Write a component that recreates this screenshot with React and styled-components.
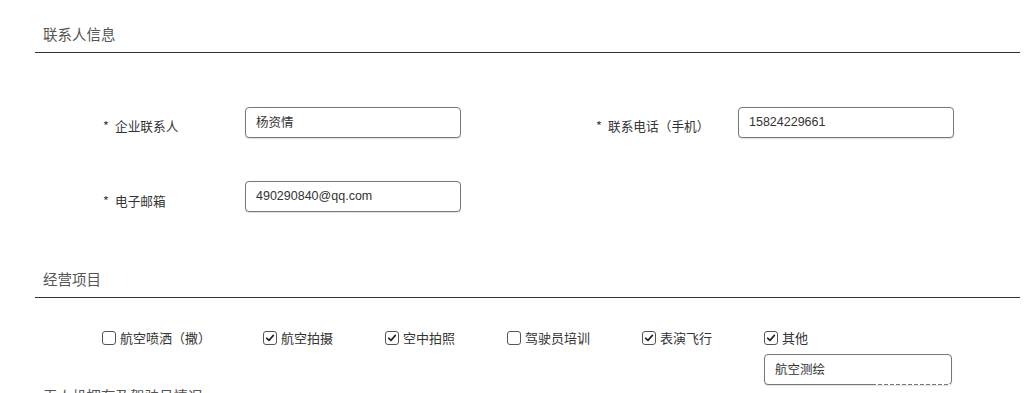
import React from 'react'
import styled, { createGlobalStyle } from 'styled-components'

const GlobalStyle = createGlobalStyle`
  html, body {
    margin: 0;
    padding: 0;
    background: #fff;
    overflow: hidden;
  }
  body {
    font-family: "Liberation Sans", "Noto Sans CJK SC", sans-serif;
    color: #333;
  }
`

const Page = styled.div`
  padding: 24px 4px 0 35px;
`

const SectionTitle = styled.div`
  font-family: "Noto Sans CJK SC", sans-serif;
  font-size: 14.5px;
  line-height: 20px;
  color: #555;
  padding: 0 0 8px 8px;
  border-bottom: 1px solid #333;
`

const FieldGrid = styled.div`
  display: grid;
  grid-template-columns: 493px 493px;
  row-gap: 43px;
  padding: 54px 0 57px;
`

const Field = styled.div`
  display: flex;
  align-items: center;
  padding-left: 68px;
`

const Label = styled.label`
  width: 142px;
  flex-shrink: 0;
  font-family: "Noto Sans CJK SC", sans-serif;
  font-size: 12.7px;
  color: #333;
  padding-top: ${p => (p.$low ? '8px' : '6px')};
  span {
    display: inline-block;
    width: 12px;
  }
`

const TextInput = styled.input`
  box-sizing: border-box;
  width: ${p => p.$w || 216}px;
  height: 31px;
  border: 1px solid #777;
  border-radius: 4px;
  padding: 0 10px 2px;
  font-family: "Liberation Sans", "Noto Sans CJK SC", sans-serif;
  font-size: 12.5px;
  color: #333;
  outline: none;
  background: #fff;
  box-shadow: 0 1px 1px rgba(0, 0, 0, 0.12);
`

const Checks = styled.div`
  display: flex;
  align-items: flex-start;
  gap: 52px;
  padding: 33px 0 0 67px;
  height: 55px;
`

const CheckCol = styled.div`
  display: flex;
  flex-direction: column;
  gap: 9px;
`

const CheckItem = styled.label`
  display: flex;
  align-items: center;
  gap: 4px;
  font-family: "Noto Sans CJK SC", sans-serif;
  font-size: 13px;
  color: #333;
  line-height: 14px;
`

const Box = styled.span`
  box-sizing: border-box;
  width: 14px;
  height: 14px;
  border: 1.5px solid #555;
  border-radius: 3px;
  display: flex;
  align-items: center;
  justify-content: center;
  background: #fff;
`

const OtherInput = styled.div`
  position: relative;
  &::after {
    content: '';
    position: absolute;
    left: 108px;
    bottom: 0;
    width: 80px;
    height: 1px;
    background: repeating-linear-gradient(90deg, transparent 0 4px, #fff 4px 6px);
  }
`

function Check({ checked, children }) {
  return (
    <CheckItem>
      <Box>
        {checked && (
          <svg width="10" height="10" viewBox="0 0 10 10">
            <path d="M1.6 5.2 L4 7.4 L8.4 2.4" fill="none" stroke="#222" strokeWidth="1.6" strokeLinecap="round" strokeLinejoin="round" />
          </svg>
        )}
      </Box>
      {children}
    </CheckItem>
  )
}

export default function App() {
  return (
    <Page>
      <GlobalStyle />
      <SectionTitle>联系人信息</SectionTitle>
      <FieldGrid>
        <Field>
          <Label><span>*</span>企业联系人</Label>
          <TextInput defaultValue="杨资情" />
        </Field>
        <Field>
          <Label><span>*</span>联系电话（手机）</Label>
          <TextInput defaultValue="15824229661" />
        </Field>
        <Field>
          <Label $low><span>*</span>电子邮箱</Label>
          <TextInput defaultValue="490290840@qq.com" />
        </Field>
      </FieldGrid>
      <SectionTitle>经营项目</SectionTitle>
      <Checks>
        <Check>航空喷洒（撒）</Check>
        <Check checked>航空拍摄</Check>
        <Check checked>空中拍照</Check>
        <Check>驾驶员培训</Check>
        <Check checked>表演飞行</Check>
        <CheckCol>
          <Check checked>其他</Check>
          <OtherInput>
            <TextInput $w={188} defaultValue="航空测绘" />
          </OtherInput>
        </CheckCol>
      </Checks>
      <SectionTitle>无人机拥有及驾驶员情况</SectionTitle>
    </Page>
  )
}
